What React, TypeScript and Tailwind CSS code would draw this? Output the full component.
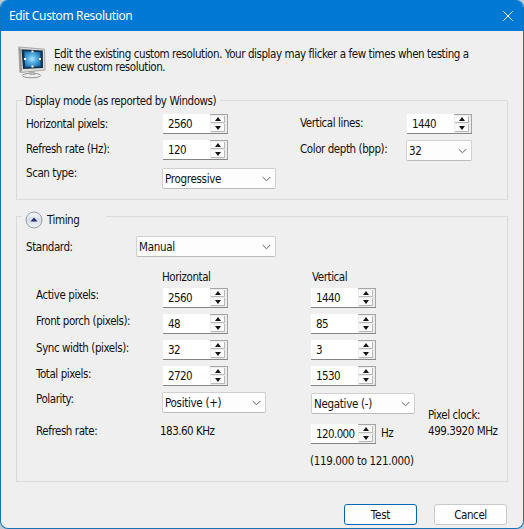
import React from "react";

type BoxProps = { className?: string; children?: React.ReactNode };

function Label({ className = "", children }: BoxProps) {
  return <div className={`h-[14px] shrink-0 whitespace-pre leading-[14px] ${className}`}>{children}</div>;
}

function Spinner({ value, className = "" }: { value: string; className?: string }) {
  return (
    <div className={`flex h-5 w-[65px] shrink-0 border-b border-[#858585] bg-white ${className}`}>
      <div className="w-[47px] whitespace-pre pl-[5px] pt-[3px] leading-[14px] tracking-[-0.6px]">{value}</div>
      <div className="flex w-[18px] flex-col gap-px border-r border-t border-[#a6a6a6] bg-[#ececec] pl-px pr-[2px] pt-px">
        <div className="flex h-[7px] items-center justify-center border-b border-r border-[#b9b9b9] bg-[#fbfbfb]">
          <svg width="6" height="4" viewBox="0 0 6 4"><path d="M3 0L6 4H0z" fill="#151515" /></svg>
        </div>
        <div className="flex h-2 items-center justify-center border-b border-r border-[#b9b9b9] bg-[#fbfbfb]">
          <svg width="6" height="4" viewBox="0 0 6 4"><path d="M3 4L0 0H6z" fill="#151515" /></svg>
        </div>
      </div>
    </div>
  );
}

function Combo({ value, className = "" }: { value: string; className?: string }) {
  return (
    <div className={`flex h-[21px] shrink-0 items-center justify-between rounded-[2px] border border-[#d0d0d0] border-b-[#bcbcbc] bg-[#fdfdfd] pl-[2px] pr-1 ${className}`}>
      <span className="whitespace-pre leading-[14px] tracking-[-0.3px]">{value}</span>
      <svg width="9" height="6" viewBox="0 0 9 6" fill="none"><path d="M.7 1L4.5 4.8L8.3 1" stroke="#606060" /></svg>
    </div>
  );
}

function Row({ className = "", children }: BoxProps) {
  return <div className={`flex items-start ${className}`}>{children}</div>;
}

function MonitorIcon() {
  return (
    <svg className="shrink-0" width="28" height="34" viewBox="0 0 28 34">
      <defs>
        <radialGradient id="screen" cx=".48" cy=".48" r=".65">
          <stop offset="0" stopColor="#b4e6ff" /><stop offset=".4" stopColor="#55afe2" /><stop offset="1" stopColor="#1267a8" />
        </radialGradient>
      </defs>
      <ellipse cx="13.5" cy="29.5" rx="9" ry="2.3" fill="#eeeeee" stroke="#929292" />
      <path d="M10.5 24l1 5h6l-1-4z" fill="#b5b5b5" />
      <path d="M.7 1L26.5 3.2L27 24L2 26.5z" fill="#deddd9" stroke="#aaa6a3" />
      <path d="M.8 1L3 3L4 25L2 26.5z" fill="#9f9794" />
      <path d="M3.5 3.2L24.8 4.5L25 22L5 23z" fill="#123453" />
      <path d="M6.2 5.3L22.4 6.2L22.7 20.3L7.2 21z" fill="url(#screen)" />
      <path d="M13.5 4.5h2v2h-2zM13.5 19.5h2v2h-2zM6 12h2v2h-2zM21 12h2v2h-2z" fill="#fff" />
    </svg>
  );
}

function Collapse() {
  return (
    <svg width="18" height="18" viewBox="0 0 18 18">
      <defs><linearGradient id="knob" x2="0" y2="1"><stop stopColor="#fdfdfe" /><stop offset=".5" stopColor="#d6dbe5" /><stop offset="1" stopColor="#f4f8fd" /></linearGradient></defs>
      <circle cx="9" cy="9" r="8" fill="url(#knob)" stroke="#949daa" />
      <path d="M9 6.5L12.5 10.5H5.5z" fill="#202b66" />
    </svg>
  );
}

const timings = [
  { label: "Active pixels:", h: "2560", v: "1440", offset: "" },
  { label: "Front porch (pixels):", h: "48", v: "85", offset: "" },
  { label: "Sync width (pixels):", h: "32", v: "3", offset: "mt-px" },
  { label: "Total pixels:", h: "2720", v: "1530", offset: "mt-px" },
];

export default function App() {
  return (
    <div className="h-[529px] w-[524px] overflow-hidden bg-[#b8cbd8] font-['DejaVu_Sans_Condensed','DejaVu_Sans',sans-serif] text-[11.5px] tracking-[-0.43px] text-[#111]">
      <div className="h-[529px] overflow-hidden rounded-[8px] border border-t-0 border-[#1773b4] bg-[#efefef]">
        <header className="flex h-[31px] items-center justify-between bg-[#0078d4] pl-2 pr-[10px] text-white">
          <span className="font-['Noto_Sans',sans-serif] text-[12px] tracking-[-0.35px]">Edit Custom Resolution</span>
          <svg width="10" height="10" viewBox="0 0 10 10"><path d="M.3.3L9.7 9.7M9.7.3L.3 9.7" stroke="#fff" /></svg>
        </header>
        <main className="px-[15px]">
          <Row className="h-[69px] pl-[2px] pt-[15px]">
            <MonitorIcon />
            <div className="ml-2 mt-[2px] whitespace-pre leading-[13px]">Edit the existing custom resolution. Your display may flicker a few times when testing a<br />new custom resolution.</div>
          </Row>
          <section className="h-[100px] border border-[#d9dadb]">
            <Row className="-mt-[7px] h-5 pl-[6px]"><Label className="bg-[#efefef] px-[2px] pr-1">Display mode (as reported by Windows)</Label></Row>
            <Row className="h-[26px] pl-[9px]">
              <Label className="mt-[3px] w-[137px]">Horizontal pixels:</Label><Spinner value="2560" />
              <Label className="ml-[72px] mt-[2px] w-[107px]">Vertical lines:</Label><Spinner value="1440" />
            </Row>
            <Row className="h-7 pl-[9px]">
              <Label className="mt-[2px] w-[137px]">Refresh rate (Hz):</Label><Spinner value="120" />
              <Label className="ml-[72px] mt-[2px] w-[106px]">Color depth (bpp):</Label><Combo value="32" className="w-[66px]" />
            </Row>
            <Row className="pl-[9px]"><Label className="-mt-[2px] w-[136px]">Scan type:</Label><Combo value="Progressive" className="w-[114px]" /></Row>
          </section>
          <section className="mt-4 h-[266px] border border-[#d9dadb]">
            <Row className="-mt-[6px] h-[25px] pl-[5px]"><div className="flex w-[84px] items-start bg-[#efefef] pl-[3px]"><Collapse /><Label className="ml-1 mt-[2px]">Timing</Label></div></Row>
            <Row className="h-[34px] pl-[9px]"><Label className="mt-1 w-[110px]">Standard:</Label><Combo value="Manual" className="w-[140px]" /></Row>
            <Row className="h-[18px] pl-[145px]"><Label className="w-[150px]">Horizontal</Label><Label>Vertical</Label></Row>
            {timings.map((t) => (
              <Row key={t.label} className="h-[26px] pl-[19px]">
                <Label className={`w-[127px] ${t.offset}`}>{t.label}</Label><Spinner value={t.h} />
                <Spinner value={t.v} className="ml-[83px]" />
              </Row>
            ))}
            <Row className="h-8 pl-[19px]"><Label className="w-[126px]">Polarity:</Label><Combo value="Positive (+)" className="w-[104px]" /><Combo value="Negative (-)" className="ml-[45px] mt-px w-[104px]" /></Row>
            <Row className="h-[30px] pl-[19px]">
              <Label className="w-[124px]">Refresh rate:</Label><Label className="w-[151px] tracking-[-0.5px]">183.60 KHz</Label>
              <Spinner value="120.000" /><Label className="ml-[5px] mt-[2px] w-[47px]">Hz</Label>
              <div className="-mt-4 flex flex-col gap-[2px]"><Label>Pixel clock:</Label><Label>499.3920 MHz</Label></div>
            </Row>
            <Row className="pl-[293px]"><Label className="tracking-[-0.35px]">(119.000 to 121.000)</Label></Row>
          </section>
          <footer className="flex justify-end gap-[17px] pr-px pt-[22px]">
            <button className="h-[21px] w-[73px] rounded-[3px] border border-[#0067b8] bg-[#fdfdfd] text-center leading-[20px] tracking-[-0.2px]">Test</button>
            <button className="h-[21px] w-[73px] rounded-[3px] border border-[#c9c9c9] bg-[#fdfdfd] text-center leading-[20px] tracking-[-0.4px]">Cancel</button>
          </footer>
        </main>
      </div>
    </div>
  );
}
